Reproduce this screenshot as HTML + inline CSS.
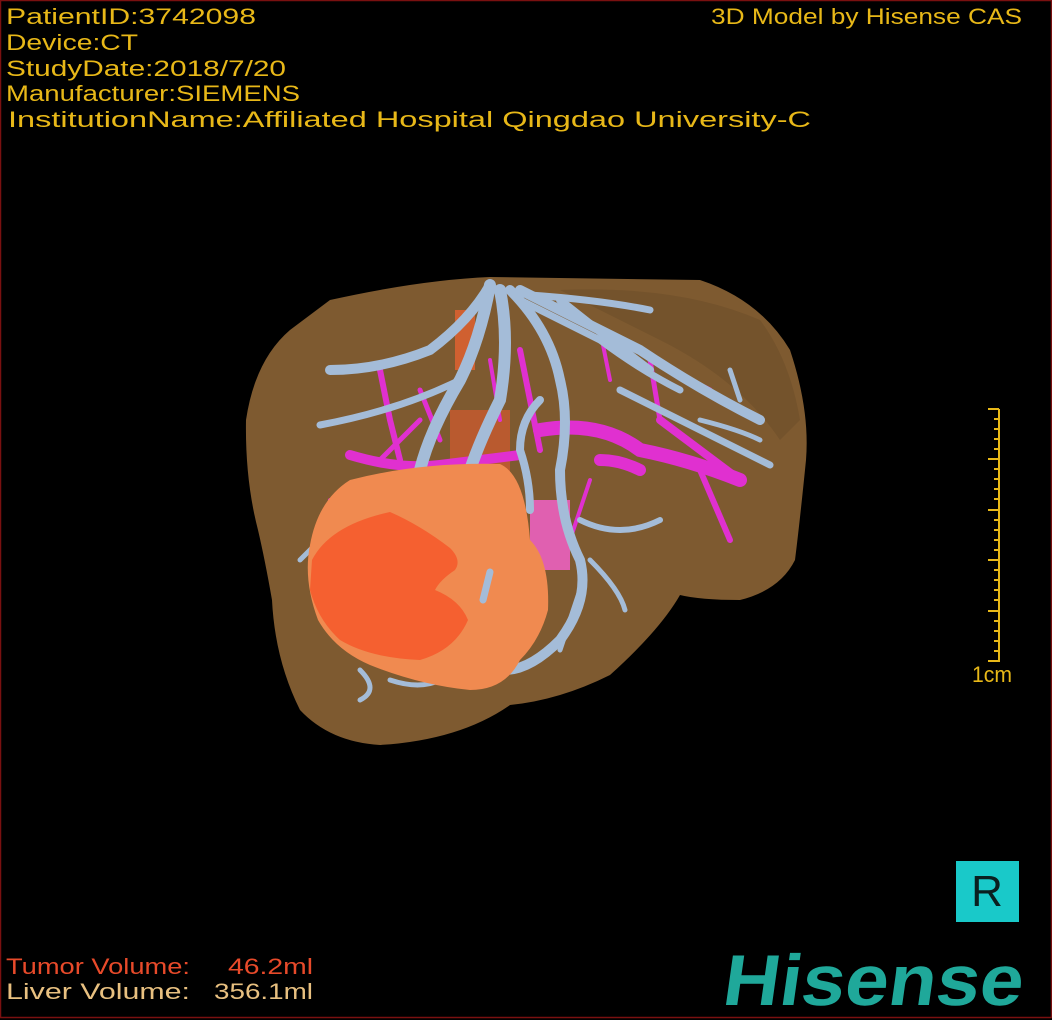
<!DOCTYPE html>
<html><head><style>
html,body{margin:0;padding:0;background:#000;}
svg{display:block;}
</style></head><body>
<svg width="1052" height="1020" viewBox="0 0 1052 1020" xmlns="http://www.w3.org/2000/svg">
<rect x="0" y="0" width="1052" height="1020" fill="#000"/>
<rect x="0.5" y="0.5" width="1051" height="1017" fill="none" stroke="#7a1010" stroke-width="1.5"/>
<g font-family="Liberation Sans, sans-serif" font-size="22" fill="#e8b818">
<text x="6" y="24" textLength="250" lengthAdjust="spacingAndGlyphs">PatientID:3742098</text>
<text x="6" y="50" textLength="132" lengthAdjust="spacingAndGlyphs">Device:CT</text>
<text x="6" y="76" textLength="280" lengthAdjust="spacingAndGlyphs">StudyDate:2018/7/20</text>
<text x="6" y="101" textLength="294" lengthAdjust="spacingAndGlyphs">Manufacturer:SIEMENS</text>
<text x="8" y="127" textLength="803" lengthAdjust="spacingAndGlyphs">InstitutionName:Affiliated Hospital Qingdao University-C</text>
<text x="711" y="24" textLength="311" lengthAdjust="spacingAndGlyphs">3D Model by Hisense CAS</text>
<text x="972" y="682" textLength="40" lengthAdjust="spacingAndGlyphs">1cm</text>
</g>
<g font-family="Liberation Sans, sans-serif" font-size="22">
<text x="6" y="974" fill="#e84a2a" textLength="184" lengthAdjust="spacingAndGlyphs">Tumor Volume:</text>
<text x="313" y="974" fill="#e84a2a" text-anchor="end" textLength="85" lengthAdjust="spacingAndGlyphs">46.2ml</text>
<text x="6" y="999" fill="#e8c080" textLength="184" lengthAdjust="spacingAndGlyphs">Liver Volume:</text>
<text x="313" y="999" fill="#e8c080" text-anchor="end" textLength="99" lengthAdjust="spacingAndGlyphs">356.1ml</text>
</g>
<g stroke="#e8b818" stroke-width="2">
<line x1="999" y1="409" x2="999" y2="662"/>
<line x1="988" y1="409" x2="999" y2="409"/><line x1="988" y1="459" x2="999" y2="459"/>
<line x1="988" y1="510" x2="999" y2="510"/><line x1="988" y1="560" x2="999" y2="560"/>
<line x1="988" y1="611" x2="999" y2="611"/><line x1="988" y1="661" x2="999" y2="661"/>
<path d="M994 419h5M994 429h5M994 439h5M994 449h5M994 469h5M994 479h5M994 489h5M994 499h5M994 520h5M994 530h5M994 540h5M994 550h5M994 570h5M994 580h5M994 590h5M994 600h5M994 621h5M994 631h5M994 641h5M994 651h5"/>
</g>
<rect x="956" y="861" width="63" height="61" fill="#19c9c9"/>
<text x="987" y="906" text-anchor="middle" font-family="Liberation Sans, sans-serif" font-size="44" fill="#0a2020">R</text>
<text x="722" y="1005" font-family="Liberation Sans, sans-serif" font-size="72" font-weight="bold" fill="#1fa89a" textLength="300" lengthAdjust="spacingAndGlyphs" transform="skewX(-8) translate(140,0)">Hisense</text>
<path d="M330 300 Q420 280 490 277 L700 280 Q760 300 790 350 Q810 410 806 460 Q800 520 795 560 Q780 590 740 600 Q700 600 680 595 Q660 630 610 675 Q560 700 510 705 Q460 740 380 745 Q330 742 300 710 Q275 660 272 600 Q265 560 258 530 Q245 480 246 420 Q255 360 290 330 Z" fill="#7e5a30"/>
<path d="M560 290 Q680 285 760 320 Q790 360 800 420 L780 440 Q740 380 660 340 Z" fill="#6e4e2a" opacity="0.6"/>
<rect x="455" y="310" width="20" height="60" fill="#d06030"/>
<rect x="450" y="410" width="60" height="70" fill="#c85a30" opacity="0.8"/>
<rect x="530" y="500" width="40" height="70" fill="#e060b0"/>
<g stroke="#e030d0" fill="none" stroke-linecap="round">
<path d="M350 455 Q400 470 440 465 Q480 460 520 455" stroke-width="10"/>
<path d="M380 370 L390 420 L400 460" stroke-width="6"/>
<path d="M420 390 L440 440" stroke-width="5"/>
<path d="M420 420 L380 460" stroke-width="5"/>
<path d="M520 350 L530 400 L540 450" stroke-width="6"/>
<path d="M490 360 L500 420" stroke-width="4"/>
<path d="M540 430 Q600 420 640 450 Q690 460 740 480" stroke-width="14"/>
<path d="M600 330 L610 380" stroke-width="4"/>
<path d="M660 420 Q700 450 740 480" stroke-width="8"/>
<path d="M650 360 L660 420" stroke-width="5"/>
<path d="M690 380 L710 390" stroke-width="5"/>
<path d="M700 470 L730 540" stroke-width="6"/>
<path d="M590 480 L570 540" stroke-width="4"/>
<path d="M600 460 Q620 460 640 470" stroke-width="12"/>
<path d="M330 500 L340 520" stroke-width="4"/>
</g>
<g stroke="#a4bcd8" fill="none" stroke-linecap="round">
<path d="M490 285 Q470 320 430 350 Q380 370 330 370" stroke-width="10"/>
<path d="M490 285 Q480 340 460 380 Q430 430 420 470" stroke-width="12"/>
<path d="M500 290 Q510 340 500 400 Q480 440 470 470" stroke-width="12"/>
<path d="M510 290 Q550 330 560 380 Q570 420 560 470 Q560 520 580 560 Q590 600 560 640 Q530 670 505 670" stroke-width="10"/>
<path d="M520 290 Q580 320 640 350 Q700 390 760 420" stroke-width="10"/>
<path d="M530 295 Q600 300 650 310" stroke-width="7"/>
<path d="M520 300 Q560 320 600 340 Q640 370 680 390" stroke-width="7"/>
<path d="M560 300 Q610 340 650 370" stroke-width="8"/>
<path d="M460 380 Q400 410 320 425" stroke-width="7"/>
<path d="M620 390 Q680 420 770 465" stroke-width="7"/>
<path d="M540 400 Q520 420 520 450 Q530 480 530 510" stroke-width="8"/>
<path d="M580 520 Q620 540 660 520" stroke-width="6"/>
<path d="M590 560 Q620 590 625 610" stroke-width="5"/>
<path d="M580 590 Q570 620 560 650" stroke-width="5"/>
<path d="M340 520 Q320 540 300 560" stroke-width="5"/>
<path d="M360 670 Q380 690 360 700" stroke-width="5"/>
<path d="M390 680 Q420 690 440 680" stroke-width="5"/>
<path d="M700 420 Q740 430 760 440" stroke-width="5"/>
<path d="M730 370 L740 400" stroke-width="5"/>
</g>
<path d="M350 480 Q420 462 500 464 Q525 475 530 540 Q550 560 548 610 Q540 640 520 660 Q505 690 470 690 Q420 685 370 665 Q335 650 318 620 Q303 580 310 545 Q318 500 350 480 Z" fill="#f08a50"/>
<path d="M312 560 Q330 525 390 512 Q420 525 450 548 Q462 560 455 570 Q440 580 435 590 Q460 600 468 620 Q455 650 420 660 Q370 658 340 640 Q318 620 310 590 Z" fill="#f56030"/>
<path d="M490 572 L483 600" stroke="#a4bcd8" stroke-width="7" stroke-linecap="round"/>
</svg>
</body></html>
